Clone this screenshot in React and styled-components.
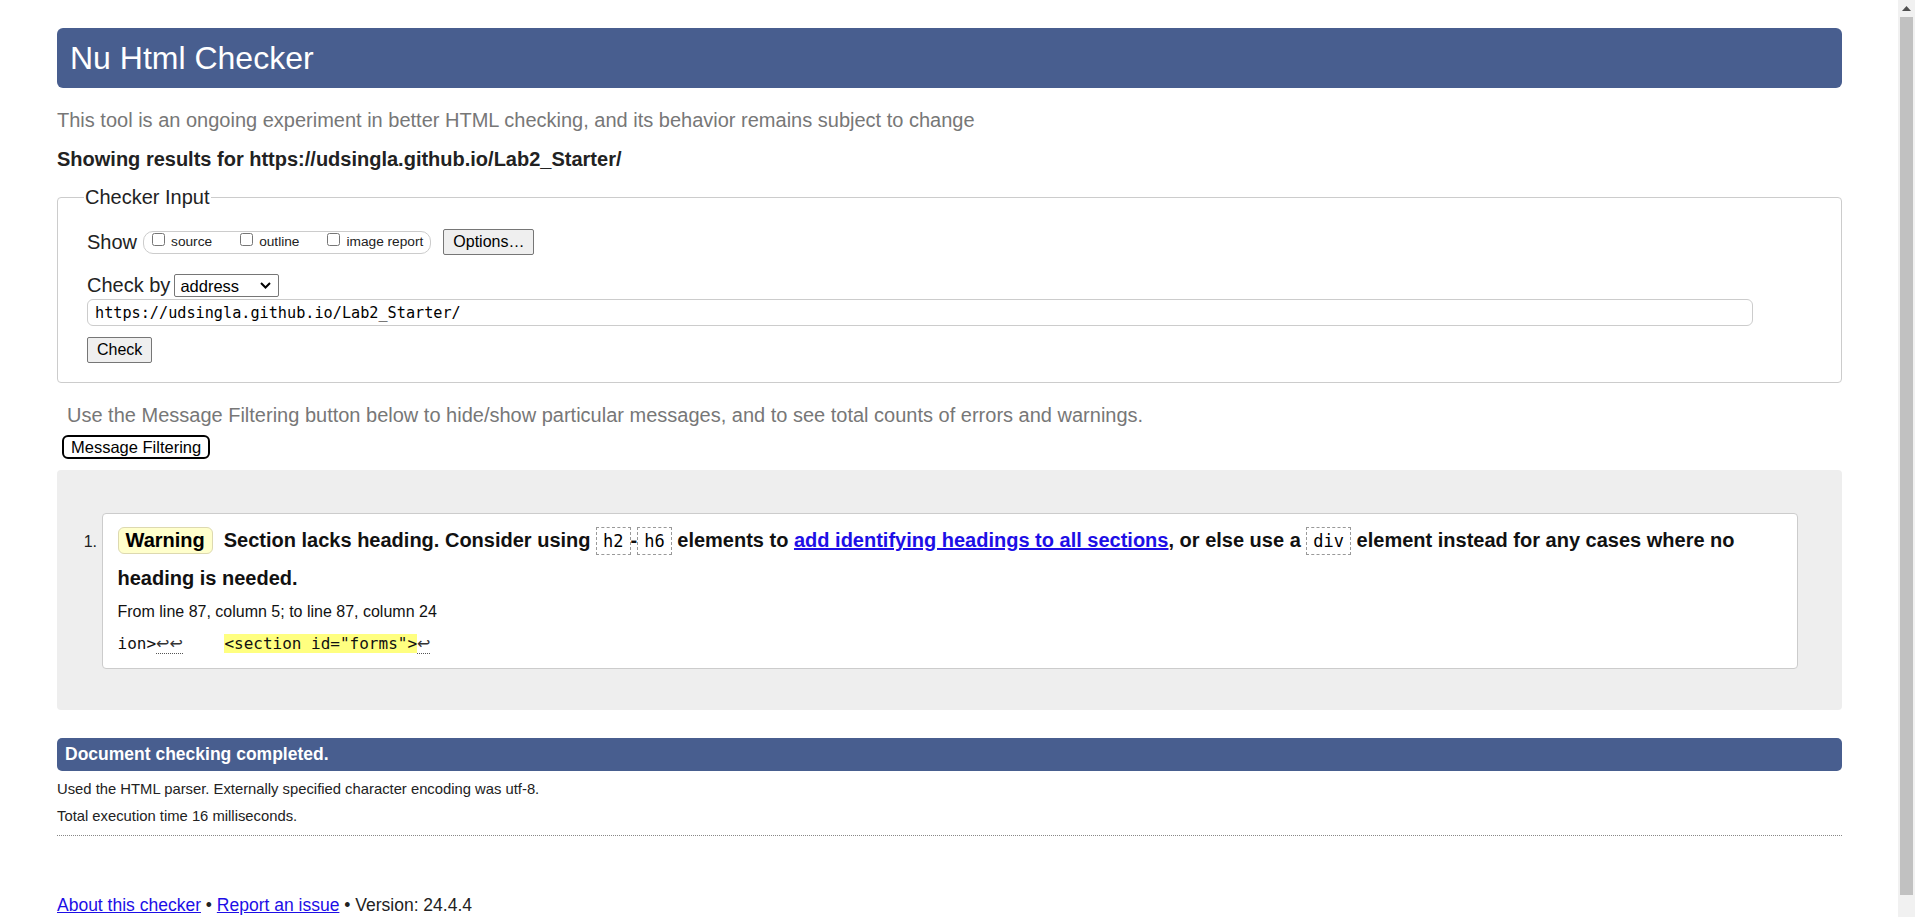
import React from "react";
import styled, { createGlobalStyle } from "styled-components";

const GlobalStyle = createGlobalStyle`
  html, body {
    margin: 0;
    padding: 0;
    height: 100%;
    overflow: hidden;
    background: #fff;
  }
  body {
    font-family: "Liberation Sans", Arial, sans-serif;
    color: #222;
  }
  #root { height: 100%; }
  * { box-sizing: border-box; }
`;

const Viewport = styled.div`
  display: flex;
  height: 100vh;
`;

const Page = styled.main`
  flex: 1;
  min-width: 0;
  padding: 28px 56px 40px 57px;
  overflow: hidden;
`;

const Scrollbar = styled.div`
  flex: none;
  width: 17px;
  background: #f1f1f1;
  display: flex;
  flex-direction: column;
  align-items: center;
`;

const ScrollArrow = styled.div`
  height: 17px;
  width: 17px;
  display: flex;
  align-items: center;
  justify-content: center;
`;

const ScrollThumb = styled.div`
  width: 13px;
  flex: 1;
  margin: 0 0 22px;
  background: #c1c1c1;
`;

const Title = styled.h1`
  margin: 0;
  height: 60px;
  line-height: 60px;
  padding: 0 13px;
  background: #485e8f;
  color: #fff;
  font-size: 32px;
  font-weight: normal;
  border-radius: 6px;
`;

const Intro = styled.p`
  margin: 21px 0 0;
  font-size: 20px;
  line-height: 23px;
  color: ${(p) => (p.$muted ? "#777" : "#222")};
  font-weight: ${(p) => (p.$bold ? "bold" : "normal")};
  padding-left: ${(p) => (p.$indent ? "10px" : "0")};
`;

const Showing = styled(Intro)`
  margin-top: 16px;
`;

const Fieldset = styled.fieldset`
  margin: 15px 0 0;
  border: 1px solid #ccc;
  border-radius: 4px;
  padding: 20px 29px 19px 29px;
  min-width: 0;
`;

const Legend = styled.legend`
  font-size: 20px;
  line-height: 23px;
  padding: 0 1px;
  margin-left: -3px;
  color: #222;
`;

const FieldBody = styled.div`
  display: flex;
  flex-direction: column;
`;

const Row = styled.div`
  display: flex;
  align-items: center;
  height: ${(p) => p.$h}px;
  margin-top: ${(p) => p.$mt || 0}px;
`;

const RowLabel = styled.span`
  font-size: 20px;
  line-height: 23px;
  color: #222;
`;

const CheckGroup = styled.span`
  display: inline-flex;
  align-items: flex-start;
  height: 23px;
  margin-left: 6px;
  padding: 1px 7px 0 8px;
  border: 1px solid #ccc;
  border-radius: 10px;
  gap: 28px;
`;

const CheckItem = styled.label`
  display: flex;
  align-items: flex-end;
`;

const Box = styled.input`
  width: 13px;
  height: 13px;
  margin: 0 6px 2px 0;
`;

const CheckText = styled.span`
  font-size: 13.7px;
  line-height: 13px;
  color: #222;
`;

const Button = styled.button`
  font-family: "Liberation Sans", Arial, sans-serif;
  font-size: 16px;
  height: ${(p) => p.$h || 26}px;
  padding: 0 9px;
  margin-left: ${(p) => p.$ml || 0}px;
  background: #efefef;
  border: 1px solid #767676;
  border-radius: 2px;
  color: #000;
`;

const SelectWrap = styled.span`
  position: relative;
  display: inline-block;
  margin-left: 4px;
`;

const Select = styled.select`
  appearance: none;
  width: 105px;
  height: 23px;
  padding: 0 0 0 5px;
  font-family: "Liberation Sans", Arial, sans-serif;
  font-size: 16.5px;
  color: #000;
  background: #fff;
  border: 1px solid #767676;
  border-radius: 2px;
`;

const Chevron = styled.svg`
  position: absolute;
  right: 8px;
  top: 8px;
  pointer-events: none;
`;

const UrlInput = styled.input`
  width: calc(100% - 59px);
  height: 27px;
  margin-top: 2px;
  padding: 0 7px;
  border: 1px solid #ccc;
  border-radius: 6px;
  font-family: "DejaVu Sans Mono", monospace;
  font-size: 15.2px;
  color: #000;
`;

const CheckButton = styled(Button)`
  align-self: flex-start;
  margin-top: 11px;
`;

const FilterButton = styled.button`
  display: block;
  margin: 8px 0 0 5px;
  height: 24px;
  padding: 0 7px;
  border: 2px solid #000;
  border-radius: 6px;
  background: #fff;
  font-family: "Liberation Sans", Arial, sans-serif;
  font-size: 16.5px;
  color: #000;
`;

const Results = styled.ol`
  margin: 11px 0 0;
  padding: 43px 44px 41px 44.5px;
  background: #eee;
  border-radius: 4px;
  list-style: decimal outside;
  font-size: 16px;
  color: #222;
`;

const Card = styled.li`
  background: #fff;
  border: 1px solid #ccc;
  border-radius: 4px;
  padding: 8px 15px 14px;
`;

const Message = styled.p`
  margin: 0;
  font-size: 20px;
  font-weight: bold;
  line-height: 37px;
  color: #111;
`;

const Badge = styled.span`
  display: inline-block;
  line-height: 25px;
  padding: 0 7px;
  margin-right: 11px;
  background: #ffc;
  border: 1px solid #ddd9b0;
  border-radius: 6px;
  color: #000;
`;

const Code = styled.code`
  font-family: "DejaVu Sans Mono", monospace;
  font-size: 17px;
  font-weight: normal;
  padding: 3px 6px;
  border: 1px dashed #999;
  color: #000;
`;

const Link = styled.a`
  color: #1d0ee6;
  text-decoration: underline;
`;

const Location = styled.p`
  margin: 5px 0 0;
  font-size: 16px;
  line-height: 20px;
  color: #111;
`;

const Extract = styled.p`
  margin: 12px 0 0;
  font-family: "DejaVu Sans Mono", monospace;
  font-size: 16px;
  line-height: 20px;
  white-space: pre;
  color: #111;
`;

const Ret = styled.span`
  font-family: "DejaVu Sans", sans-serif;
  border-bottom: 1px dotted #555;
  color: #333;
`;

const Mark = styled.mark`
  margin-left: 3px;
  background: #ffff80;
  color: #111;
`;

const DoneBar = styled.h2`
  margin: 28px 0 0;
  height: 33px;
  line-height: 33px;
  padding: 0 8px;
  background: #485e8f;
  color: #fff;
  font-size: 17.5px;
  font-weight: bold;
  border-radius: 5px;
`;

const Info = styled.p`
  margin: ${(p) => p.$mt}px 0 0;
  font-size: 14.8px;
  line-height: 17px;
  color: #222;
`;

const Divider = styled.hr`
  margin: 10.5px 0 0;
  border: 0;
  border-top: 1px dotted #888;
  height: 0;
`;

const Footer = styled.p`
  margin: 59px 0 0;
  font-size: 17.5px;
  line-height: 20px;
  color: #222;
`;

export default function App() {
  return (
    <>
      <GlobalStyle />
      <Viewport>
        <Page>
          <Title>Nu Html Checker</Title>
          <Intro $muted>
            This tool is an ongoing experiment in better HTML checking, and its
            behavior remains subject to change
          </Intro>
          <Showing $bold>
            Showing results for https://udsingla.github.io/Lab2_Starter/
          </Showing>

          <Fieldset>
            <Legend>Checker Input</Legend>
            <FieldBody>
              <Row $h={26}>
                <RowLabel>Show</RowLabel>
                <CheckGroup>
                  <CheckItem>
                    <Box type="checkbox" />
                    <CheckText>source</CheckText>
                  </CheckItem>
                  <CheckItem>
                    <Box type="checkbox" />
                    <CheckText>outline</CheckText>
                  </CheckItem>
                  <CheckItem>
                    <Box type="checkbox" />
                    <CheckText>image report</CheckText>
                  </CheckItem>
                </CheckGroup>
                <Button $ml={12}>Options…</Button>
              </Row>
              <Row $h={23} $mt={19}>
                <RowLabel>Check by</RowLabel>
                <SelectWrap>
                  <Select defaultValue="address">
                    <option value="address">address</option>
                    <option value="file">file upload</option>
                    <option value="text">text input</option>
                  </Select>
                  <Chevron width="11" height="7" viewBox="0 0 11 7">
                    <path d="M1 1 L5.5 5.5 L10 1" fill="none" stroke="#000" strokeWidth="2" />
                  </Chevron>
                </SelectWrap>
              </Row>
              <UrlInput readOnly value="https://udsingla.github.io/Lab2_Starter/" />
              <CheckButton>Check</CheckButton>
            </FieldBody>
          </Fieldset>

          <Intro $muted $indent>
            Use the Message Filtering button below to hide/show particular
            messages, and to see total counts of errors and warnings.
          </Intro>
          <FilterButton>Message Filtering</FilterButton>

          <Results>
            <Card>
              <Message>
                <Badge>Warning</Badge>Section lacks heading. Consider using{" "}
                <Code>h2</Code>-<Code>h6</Code> elements to{" "}
                <Link href="#">add identifying headings to all sections</Link>, or
                else use a <Code>div</Code> element instead for any cases where no
                heading is needed.
              </Message>
              <Location>From line 87, column 5; to line 87, column 24</Location>
              <Extract>
                {"ion>"}
                <Ret>{"↩↩"}</Ret>
                {"    "}
                <Mark>{'<section id="forms">'}</Mark>
                <Ret>{"↩"}</Ret>
              </Extract>
            </Card>
          </Results>

          <DoneBar>Document checking completed.</DoneBar>
          <Info $mt={9.5}>
            Used the HTML parser. Externally specified character encoding was utf-8.
          </Info>
          <Info $mt={10}>Total execution time 16 milliseconds.</Info>
          <Divider />
          <Footer>
            <Link href="#">About this checker</Link> •{" "}
            <Link href="#">Report an issue</Link> • Version: 24.4.4
          </Footer>
        </Page>
        <Scrollbar>
          <ScrollArrow>
            <svg width="9" height="5" viewBox="0 0 9 5">
              <path d="M0 5 L4.5 0 L9 5 Z" fill="#505050" />
            </svg>
          </ScrollArrow>
          <ScrollThumb />
        </Scrollbar>
      </Viewport>
    </>
  );
}
